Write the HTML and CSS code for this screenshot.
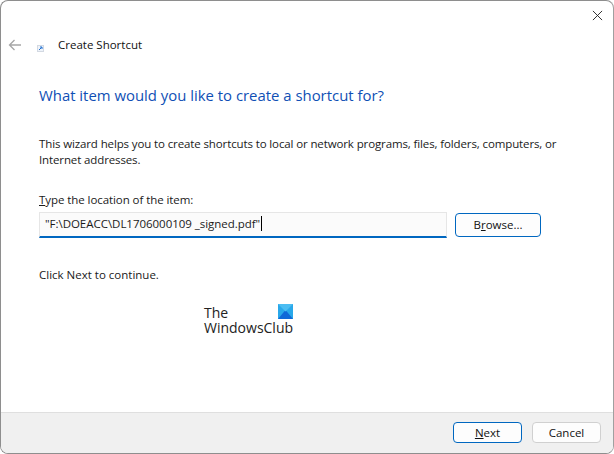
FILE: index.html
```html
<!DOCTYPE html>
<html lang="en">
<head>
<meta charset="utf-8">
<title>Create Shortcut</title>
<link rel="stylesheet" href="styles.css">
</head>
<body>
<div class="window">
  <div class="close-row">
    <svg class="close-icon" width="12" height="12" viewBox="0 0 12 12"><path d="M1 1 L11 11 M11 1 L1 11" stroke="#222" stroke-width="1" fill="none"/></svg>
  </div>
  <div class="title-row">
    <svg class="back-icon" width="14" height="12" viewBox="0 0 14 12"><path d="M13 6 H1.5 M6.5 1 L1.5 6 L6.5 11" stroke="#a6a6a6" stroke-width="1.3" fill="none"/></svg>
    <svg class="app-icon" width="7" height="7" viewBox="0 0 7 7"><rect x="0.5" y="0.5" width="6" height="6" fill="#eef3fa" stroke="#d3d9e2"/><path d="M2 5 L4.6 2.4 M3 2 H5 V4" stroke="#1f6fd0" stroke-width="1" fill="none"/></svg>
    <span class="title">Create Shortcut</span>
  </div>
  <main class="content">
    <h1 class="heading">What item would you like to create a shortcut for?</h1>
    <p class="intro">This wizard helps you to create shortcuts to local or network programs, files, folders, computers, or Internet addresses.</p>
    <label class="field-label"><u>T</u>ype the location of the item:</label>
    <div class="field-row">
      <div class="input"><span class="input-text">"F:\DOEACC\DL1706000109 _signed.pdf"</span><i class="caret"></i></div>
      <button class="btn btn-default btn-browse"><span class="browse-text">B<u>r</u>owse...</span></button>
    </div>
    <p class="hint">Click Next to continue.</p>
    <div class="logo">
      <div class="logo-top"><span>The</span><svg class="logo-mark" width="15" height="15" viewBox="0 0 15 15"><rect width="15" height="15" fill="#29a8ea"/><path d="M0 15 L7.5 6 L15 15 Z" fill="#1068d8"/><path d="M0 0 L7.5 7.5 L15 0 Z" fill="#4cbdf2"/></svg></div>
      <div class="logo-bottom">WindowsClub</div>
    </div>
  </main>
  <footer class="footer">
    <button class="btn btn-default btn-foot"><u>N</u>ext</button>
    <button class="btn btn-foot">Cancel</button>
  </footer>
</div>
</body>
</html>
```
FILE: styles.css
```css
html, body { margin: 0; padding: 0; background: #fff; }
body { width: 614px; height: 454px; overflow: hidden; font-family: "Open Sans", "Noto Sans", sans-serif; font-size: 11.5px; color: #1a1a1a; }
.window { box-sizing: border-box; width: 614px; height: 454px; display: flex; flex-direction: column; background: #fff; border: 1px solid #8e8e8e; border-right-color: #a0a0a0; border-radius: 8px; overflow: hidden; }
.close-row { height: 25px; display: flex; justify-content: flex-end; padding: 9px 10px 0 0; box-sizing: border-box; }
.close-icon { display: block; width: 11px; height: 11px; }
.title-row { display: flex; align-items: center; height: 40px; padding-left: 7px; }
.back-icon { margin-top: -3px; }
.app-icon { margin-left: 15px; margin-top: 5px; }
.title { margin-left: 14px; margin-top: -3px; color: #111; }
.content { flex: 1; padding: 19px 0 0 38px; }
.heading { margin: 0; font-weight: 400; font-size: 14.9px; line-height: 20px; color: #0f4fb5; }
.intro { margin: 31px 0 0; width: 530px; line-height: 16px; letter-spacing: -0.12px; }
.field-label { display: block; margin-top: 24px; line-height: 16px; letter-spacing: -0.07px; }
.field-row { display: flex; align-items: flex-start; margin-top: 4px; }
.input { box-sizing: border-box; width: 408px; height: 26px; display: flex; align-items: center; padding-left: 5px; letter-spacing: -0.03px; background: #fbfbfb; border: 1px solid #e6e6e6; border-bottom: 2px solid #0067c0; }
.input-text { margin-top: -2px; }
.caret { display: block; width: 1px; height: 15px; background: #000; margin: -2px 0 0 1px; }
.btn { font: inherit; color: #111; background: #fdfdfd; border: 1px solid #d0d0d0; border-radius: 4px; padding: 0; }
.btn-default { border-color: #0067c0; }
.btn-browse { width: 86px; height: 24px; margin-left: 8px; margin-top: 1px; padding-bottom: 2px; }
.browse-text { display: block; }
.hint { margin: 29px 0 0; line-height: 16px; }
.logo { width: 89px; margin: 22px 0 0 165px; font-size: 14px; color: #222; }
.logo-top { display: flex; justify-content: space-between; align-items: flex-start; height: 15px; line-height: 15px; }
.logo-bottom { height: 15px; line-height: 15px; }
.logo-mark { display: block; margin-top: -1px; }
.footer { flex: none; height: 41px; box-sizing: border-box; display: flex; justify-content: flex-end; gap: 10px; padding: 9px 12px 0 0; background: #f0f0f0; border-top: 1px solid #dfdfdf; }
.btn-foot { width: 69px; height: 21px; }
```
